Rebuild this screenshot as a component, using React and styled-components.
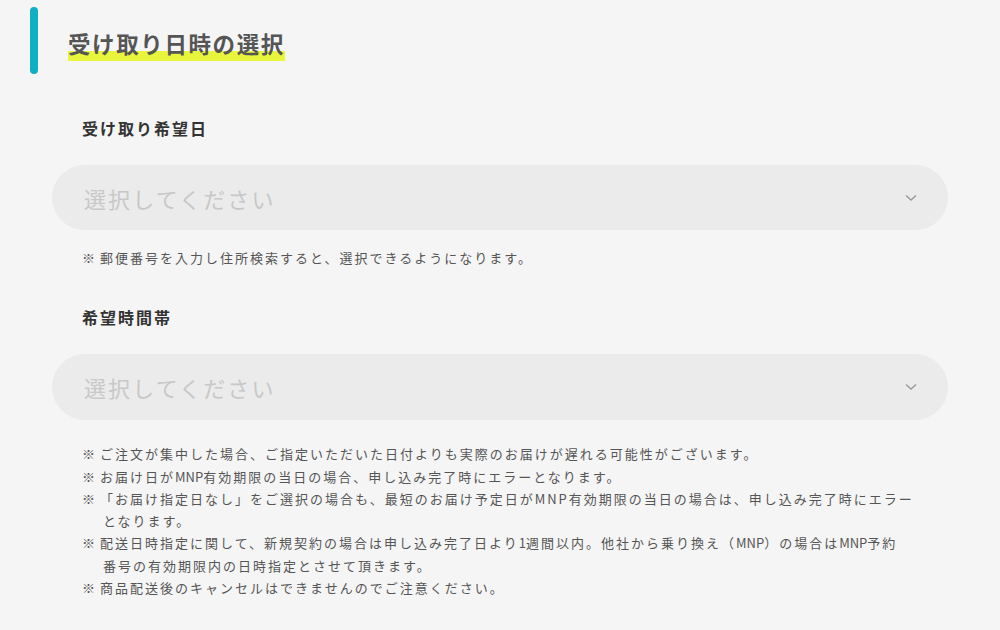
import React from "react";
import styled, { createGlobalStyle } from "styled-components";

const GlobalStyle = createGlobalStyle`
  body {
    margin: 0;
    background: #f5f5f5;
    font-family: "Noto Sans CJK JP", "Noto Sans", sans-serif;
  }
`;

const Page = styled.div`
  width: 1000px;
  height: 630px;
  box-sizing: border-box;
  padding: 7px 52px 0 30px;
  overflow: hidden;
`;

const Header = styled.div`
  display: flex;
  align-items: flex-start;
  gap: 30px;
`;

const Bar = styled.div`
  width: 8px;
  height: 67px;
  border-radius: 4px;
  background: #10afc2;
`;

const Title = styled.h2`
  margin: 22px 0 0;
  display: inline-block;
  font-size: 22.5px;
  font-weight: 700;
  line-height: 28px;
  padding-bottom: 4px;
  color: #555;
  letter-spacing: 1.6px;
  background: linear-gradient(transparent calc(100% - 10px), #e8f53c calc(100% - 10px));
`;

const Section = styled.div`
  margin: 42px 0 0 22px;
`;

const Field = styled.div`
  & + & {
    margin-top: 36px;
  }
`;

const Label = styled.div`
  padding-left: 30px;
  font-size: 16px;
  line-height: 24px;
  font-weight: 700;
  color: #333;
  letter-spacing: 2px;
`;

const Select = styled.div`
  margin-top: 25px;
  height: ${(p) => p.h}px;
  border-radius: 34px;
  background: #ebebeb;
  display: flex;
  align-items: center;
  justify-content: space-between;
  padding: 0 31px 0 32px;
`;

const Placeholder = styled.span`
  font-size: 22px;
  letter-spacing: 2.1px;
  color: #c8c8c8;
`;

const Notes = styled.ul`
  list-style: none;
  margin: ${(p) => p.gap}px 0 0;
  padding: 0 30px;
`;

const Note = styled.li`
  padding-left: 21px;
  text-indent: -21px;
  font-size: 13px;
  line-height: 22.3px;
  letter-spacing: 2px;
  color: #555;
`;

const Mark = styled.span`
  letter-spacing: 5px;
`;

const Latin = styled.span`
  letter-spacing: 0;
`;

const Chevron = () => (
  <svg width="12" height="8" viewBox="0 0 12 8">
    <polyline points="1,1.5 6,6 11,1.5" fill="none" stroke="#999" strokeWidth="1.4" />
  </svg>
);

export default function App() {
  return (
    <Page>
      <GlobalStyle />
      <Header>
        <Bar />
        <Title>受け取り日時の選択</Title>
      </Header>
      <Section>
        <Field>
          <Label>受け取り希望日</Label>
          <Select h={65}>
            <Placeholder>選択してください</Placeholder>
            <Chevron />
          </Select>
          <Notes gap={17}>
            <Note><Mark>※</Mark>郵便番号を入力し住所検索すると、選択できるようになります。</Note>
          </Notes>
        </Field>
        <Field>
          <Label>希望時間帯</Label>
          <Select h={66}>
            <Placeholder>選択してください</Placeholder>
            <Chevron />
          </Select>
          <Notes gap={23}>
            <Note><Mark>※</Mark>ご注文が集中した場合、ご指定いただいた日付よりも実際のお届けが遅れる可能性がございます。</Note>
            <Note>
              <Mark>※</Mark>お届け日が<Latin>MNP</Latin>有効期限の当日の場合、申し込み完了時にエラーとなります。
            </Note>
            <Note>
              <Mark>※</Mark>「お届け指定日なし」をご選択の場合も、最短のお届け予定日がMNP有効期限の当日の場合は、申し込み完了時にエラーとなります。
            </Note>
            <Note>
              <Mark>※</Mark>配送日時指定に関して、新規契約の場合は申し込み完了日より<Latin>1</Latin>
              週間以内。他社から乗り換え（<Latin>MNP</Latin>）の場合は<Latin>MNP</Latin>予約
              <br />
              番号の有効期限内の日時指定とさせて頂きます。
            </Note>
            <Note><Mark>※</Mark>商品配送後のキャンセルはできませんのでご注意ください。</Note>
          </Notes>
        </Field>
      </Section>
    </Page>
  );
}
